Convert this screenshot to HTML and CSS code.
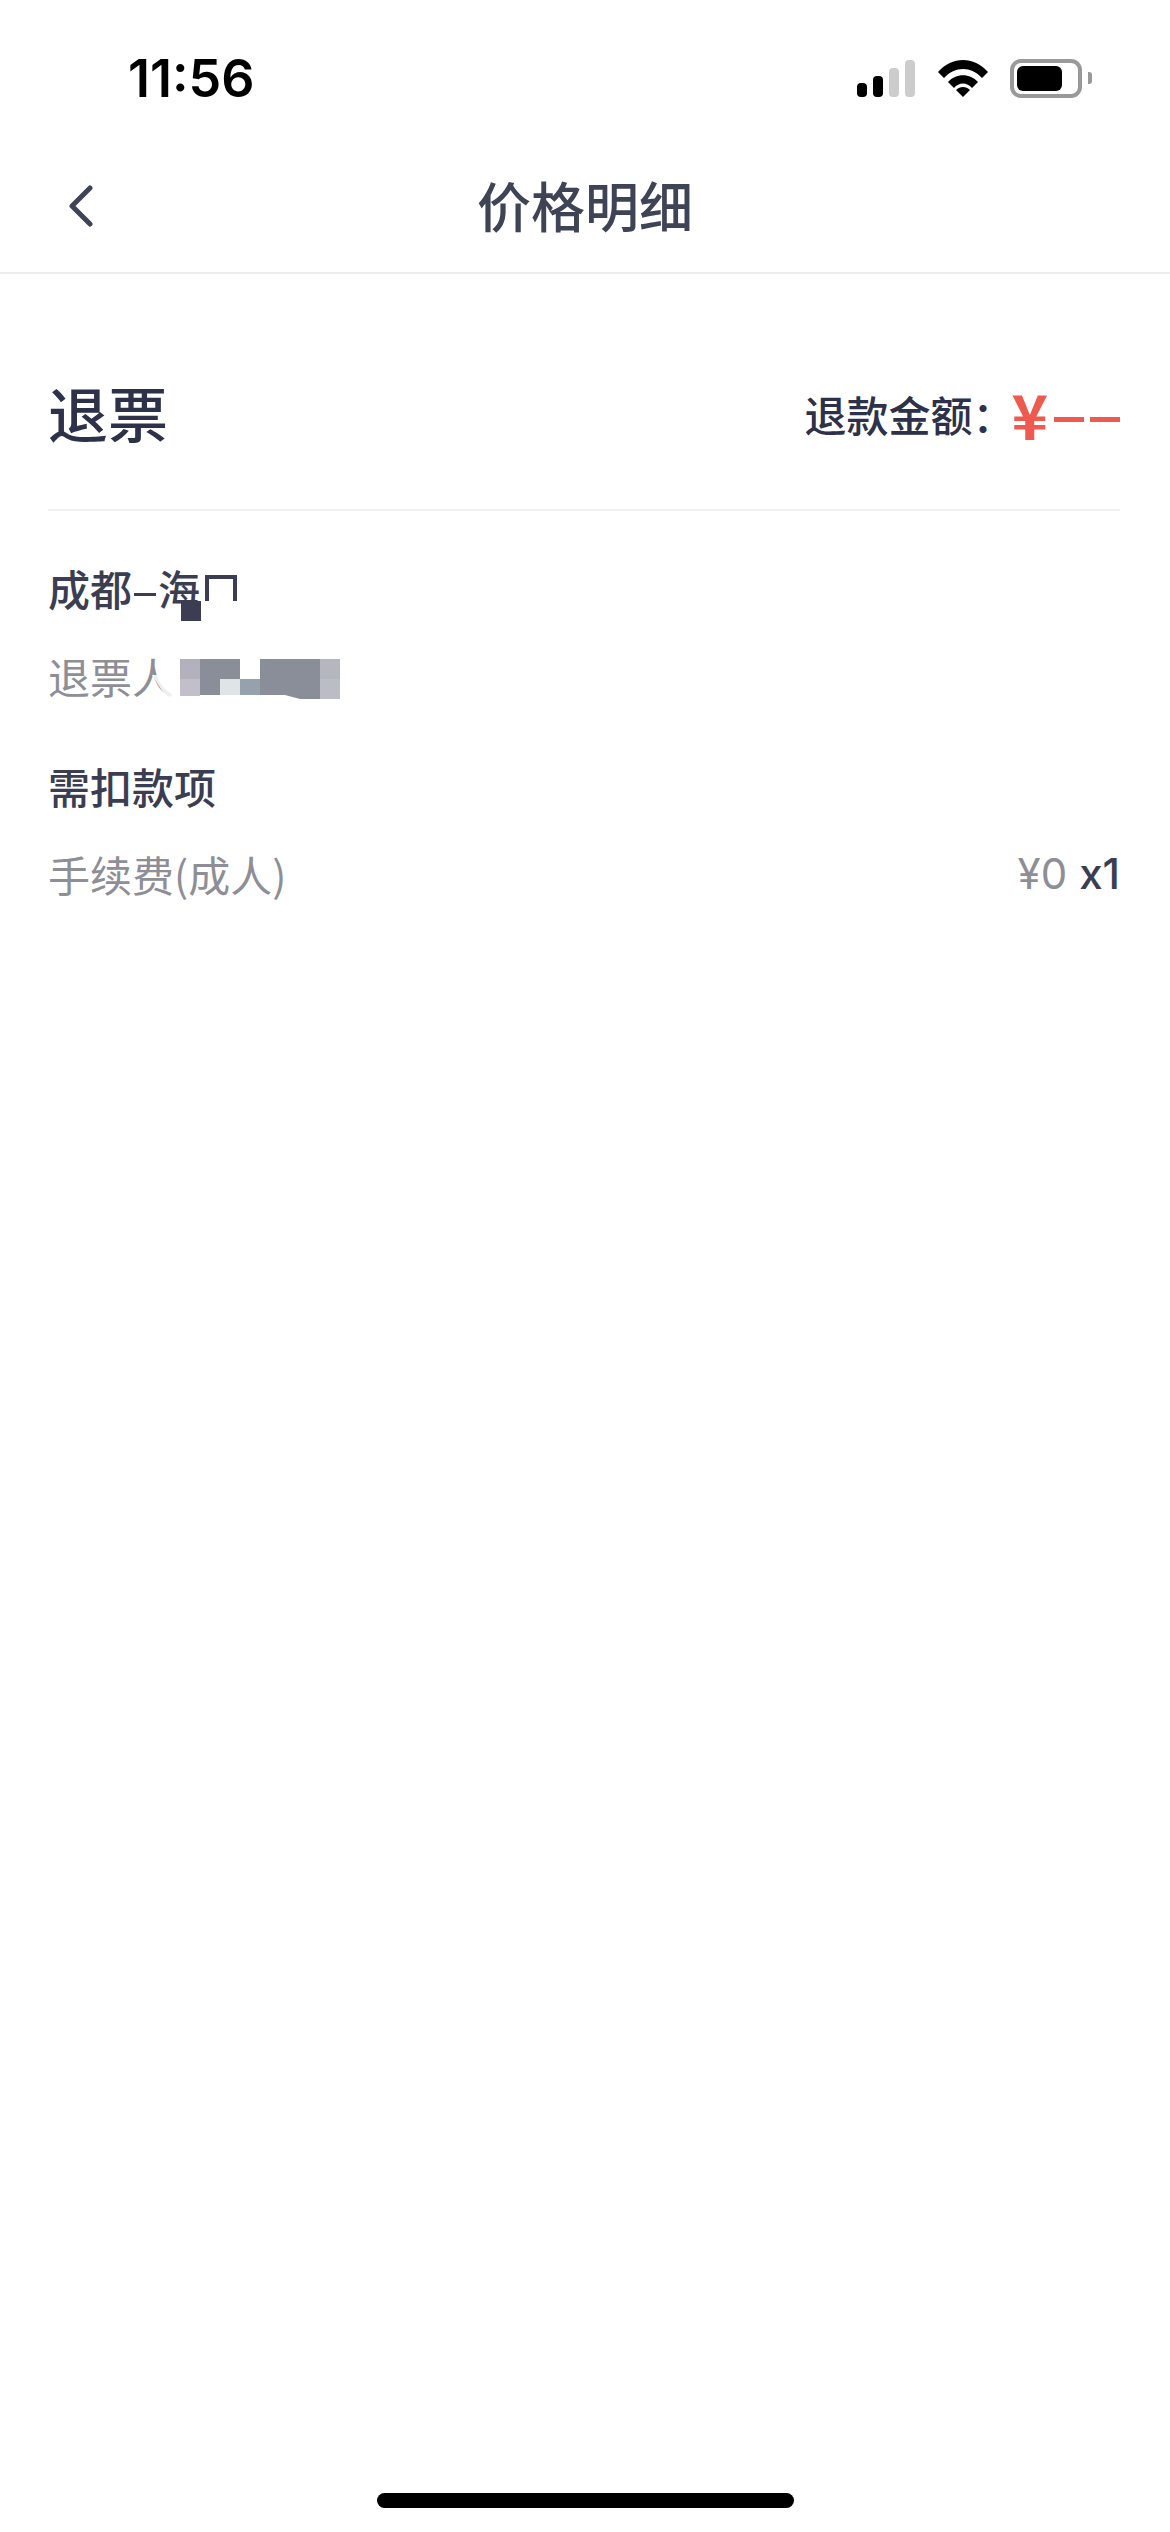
FILE: index.html
```html
<!DOCTYPE html>
<html lang="zh-CN">
<head>
  <meta charset="UTF-8">
  <meta name="viewport" content="width=device-width, initial-scale=1.0">
  <title>价格明细</title>
  <link rel="stylesheet" href="styles.css">
</head>
<body>

<div class="status-bar">
  <div class="time">11:56</div>
  <div class="status-icons">
    <div class="signal">
      <span class="bar bar-1"></span>
      <span class="bar bar-2"></span>
      <span class="bar bar-3"></span>
      <span class="bar bar-4"></span>
    </div>
    <svg class="wifi" width="50" height="37" viewBox="0 0 50 37">
      <path d="M0 12 C14 -4 36 -4 50 12 L44 18 C33 6 17 6 6 18 Z" fill="#000"/>
      <path d="M10 22 C18 13 32 13 40 22 L34 28 C29 22 21 22 16 28 Z" fill="#000"/>
      <path d="M18 30 C22 26 28 26 32 30 L25 37 Z" fill="#000"/>
    </svg>
    <div class="battery"><div class="battery-level"></div></div>
    <div class="battery-nub"></div>
  </div>
</div>

<div class="nav">
  <svg class="back" width="24" height="42" viewBox="0 0 24 42">
    <path d="M21 3 L3 21 L21 39" fill="none" stroke="#3f4356" stroke-width="5" stroke-linecap="round" stroke-linejoin="round"/>
  </svg>
  <div class="nav-title">价格明细</div>
</div>

<div class="content">
  <div class="summary">
    <div class="summary-title">退票</div>
    <div class="refund">
      <span class="refund-label">退款金额：</span>
      <span class="refund-amount">¥</span>
      <span class="refund-dash"></span>
      <span class="refund-dash"></span>
    </div>
  </div>

  <div class="row route">
    <span>成都</span><span class="route-dash"></span><span>海</span>
    <span class="route-end"><span class="route-dot"></span></span>
  </div>

  <div class="row passenger muted">
    退票人
    <svg class="mosaic" width="190" height="40" viewBox="-10 0 190 40">
      <path d="M-8 16 L20 16 L20 38 L6 38 Z" fill="#fff" opacity="0.85"/>
      <rect x="20" y="0" width="20" height="20" fill="#b3b1bb"/>
      <rect x="20" y="20" width="20" height="17" fill="#c2bfca"/>
      <rect x="40" y="0" width="40" height="20" fill="#8a8e99"/>
      <rect x="40" y="20" width="20" height="16" fill="#8a8e99"/>
      <rect x="60" y="20" width="20" height="16" fill="#dfe4e6"/>
      <rect x="80" y="20" width="20" height="16" fill="#95a2ad"/>
      <rect x="100" y="0" width="60" height="36" fill="#8a8e99"/>
      <path d="M125 36 L160 36 L160 40 L140 40 Z" fill="#8a8e99"/>
      <rect x="160" y="0" width="20" height="20" fill="#b4b7be"/>
      <rect x="160" y="20" width="20" height="20" fill="#babdc4"/>
    </svg>
  </div>

  <div class="row section-title">需扣款项</div>

  <div class="row fee">
    <span class="muted">手续费(成人)</span>
    <span class="fee-value"><span class="muted">¥0</span><span class="fee-count">x1</span></span>
  </div>
</div>

<div class="home-bar"></div>

</body>
</html>
```

FILE: styles.css
```css
* {
  box-sizing: border-box;
}

body {
  margin: 0;
  width: 1170px;
  height: 2532px;
  position: relative;
  overflow: hidden;
  background: #fff;
  color: #3b3e52;
  font-family: "Noto Sans CJK SC", "Noto Sans", sans-serif;
}

.status-bar {
  height: 140px;
  padding: 16px 78px 0 128px;
  display: flex;
  justify-content: space-between;
  align-items: center;
}

.time {
  font-family: Inter, "Liberation Sans", sans-serif;
  font-size: 52px;
  font-weight: 600;
  color: #000;
}

.status-icons {
  display: flex;
  align-items: center;
}

.signal {
  display: flex;
  align-items: flex-end;
  gap: 6px;
  height: 37px;
  margin-right: 23px;
}

.bar {
  width: 10px;
  border-radius: 4px;
  background: #000;
}

.bar-1 { height: 14px; }
.bar-2 { height: 21px; }
.bar-3 { height: 29px; background: #cccccc; }
.bar-4 { height: 37px; background: #cccccc; }

.wifi {
  margin-right: 22px;
}

.battery {
  width: 72px;
  height: 39px;
  padding: 3px;
  border: 4px solid #999;
  border-radius: 11px;
}

.battery-level {
  width: 45px;
  height: 100%;
  background: #000;
  border-radius: 6px;
}

.battery-nub {
  width: 4px;
  height: 12px;
  margin-left: 6px;
  background: #999;
  border-radius: 0 3px 3px 0;
}

.nav {
  height: 134px;
  position: relative;
  display: flex;
  justify-content: center;
  align-items: center;
  border-bottom: 2px solid #eeeeee;
}

.back {
  position: absolute;
  left: 69px;
  top: 45px;
}

.nav-title {
  font-size: 54px;
  font-weight: 500;
  line-height: 70px;
  margin-top: -3px;
  color: #3f4356;
}

.content {
  padding: 0 50px 0 48px;
}

.summary {
  padding: 97px 0 56px 0;
  display: flex;
  justify-content: space-between;
  align-items: flex-start;
  border-bottom: 2px solid #f0f0f0;
}

.summary-title {
  font-size: 60px;
  font-weight: 500;
  line-height: 82px;
  color: #2d3149;
}

.refund {
  display: flex;
  align-items: center;
  height: 82px;
  padding-top: 3px;
}

.refund-label {
  font-size: 42px;
  font-weight: 500;
  color: #2d3149;
  margin-right: -3px;
}

.refund-amount {
  font-size: 62px;
  font-weight: 700;
  line-height: 79px;
  color: #ef5a50;
}

.refund-dash {
  width: 30px;
  height: 5px;
  margin-left: 6px;
  margin-top: 12px;
  background: #ef5a50;
}

.row {
  font-size: 42px;
  line-height: 60px;
  height: 60px;
}

.route {
  margin-top: 47px;
  display: flex;
  align-items: center;
  font-weight: 500;
}

.route-dash {
  width: 22px;
  height: 3px;
  margin: 12px 2px 0 2px;
  background: #3b3e52;
}

.route-end {
  position: relative;
  width: 32px;
  height: 26px;
  margin-left: 5px;
  border: 4px solid #3b3e52;
  border-bottom: 0;
}

.route-dot {
  position: absolute;
  left: -28px;
  top: 22px;
  width: 20px;
  height: 20px;
  background: #3b3e52;
}

.passenger {
  position: relative;
  margin-top: 28px;
}

.mosaic {
  position: absolute;
  left: 102px;
  top: 13px;
}

.muted {
  color: #8e8e96;
}

.section-title {
  margin-top: 50px;
  font-weight: 500;
}

.fee {
  margin-top: 28px;
  display: flex;
  justify-content: space-between;
}

.fee-value {
  font-family: Inter, "Noto Sans", sans-serif;
}

.fee-count {
  margin-left: 12px;
  font-weight: 500;
}

.home-bar {
  position: absolute;
  left: 377px;
  top: 2493px;
  width: 417px;
  height: 15px;
  border-radius: 8px;
  background: #000;
}
```
